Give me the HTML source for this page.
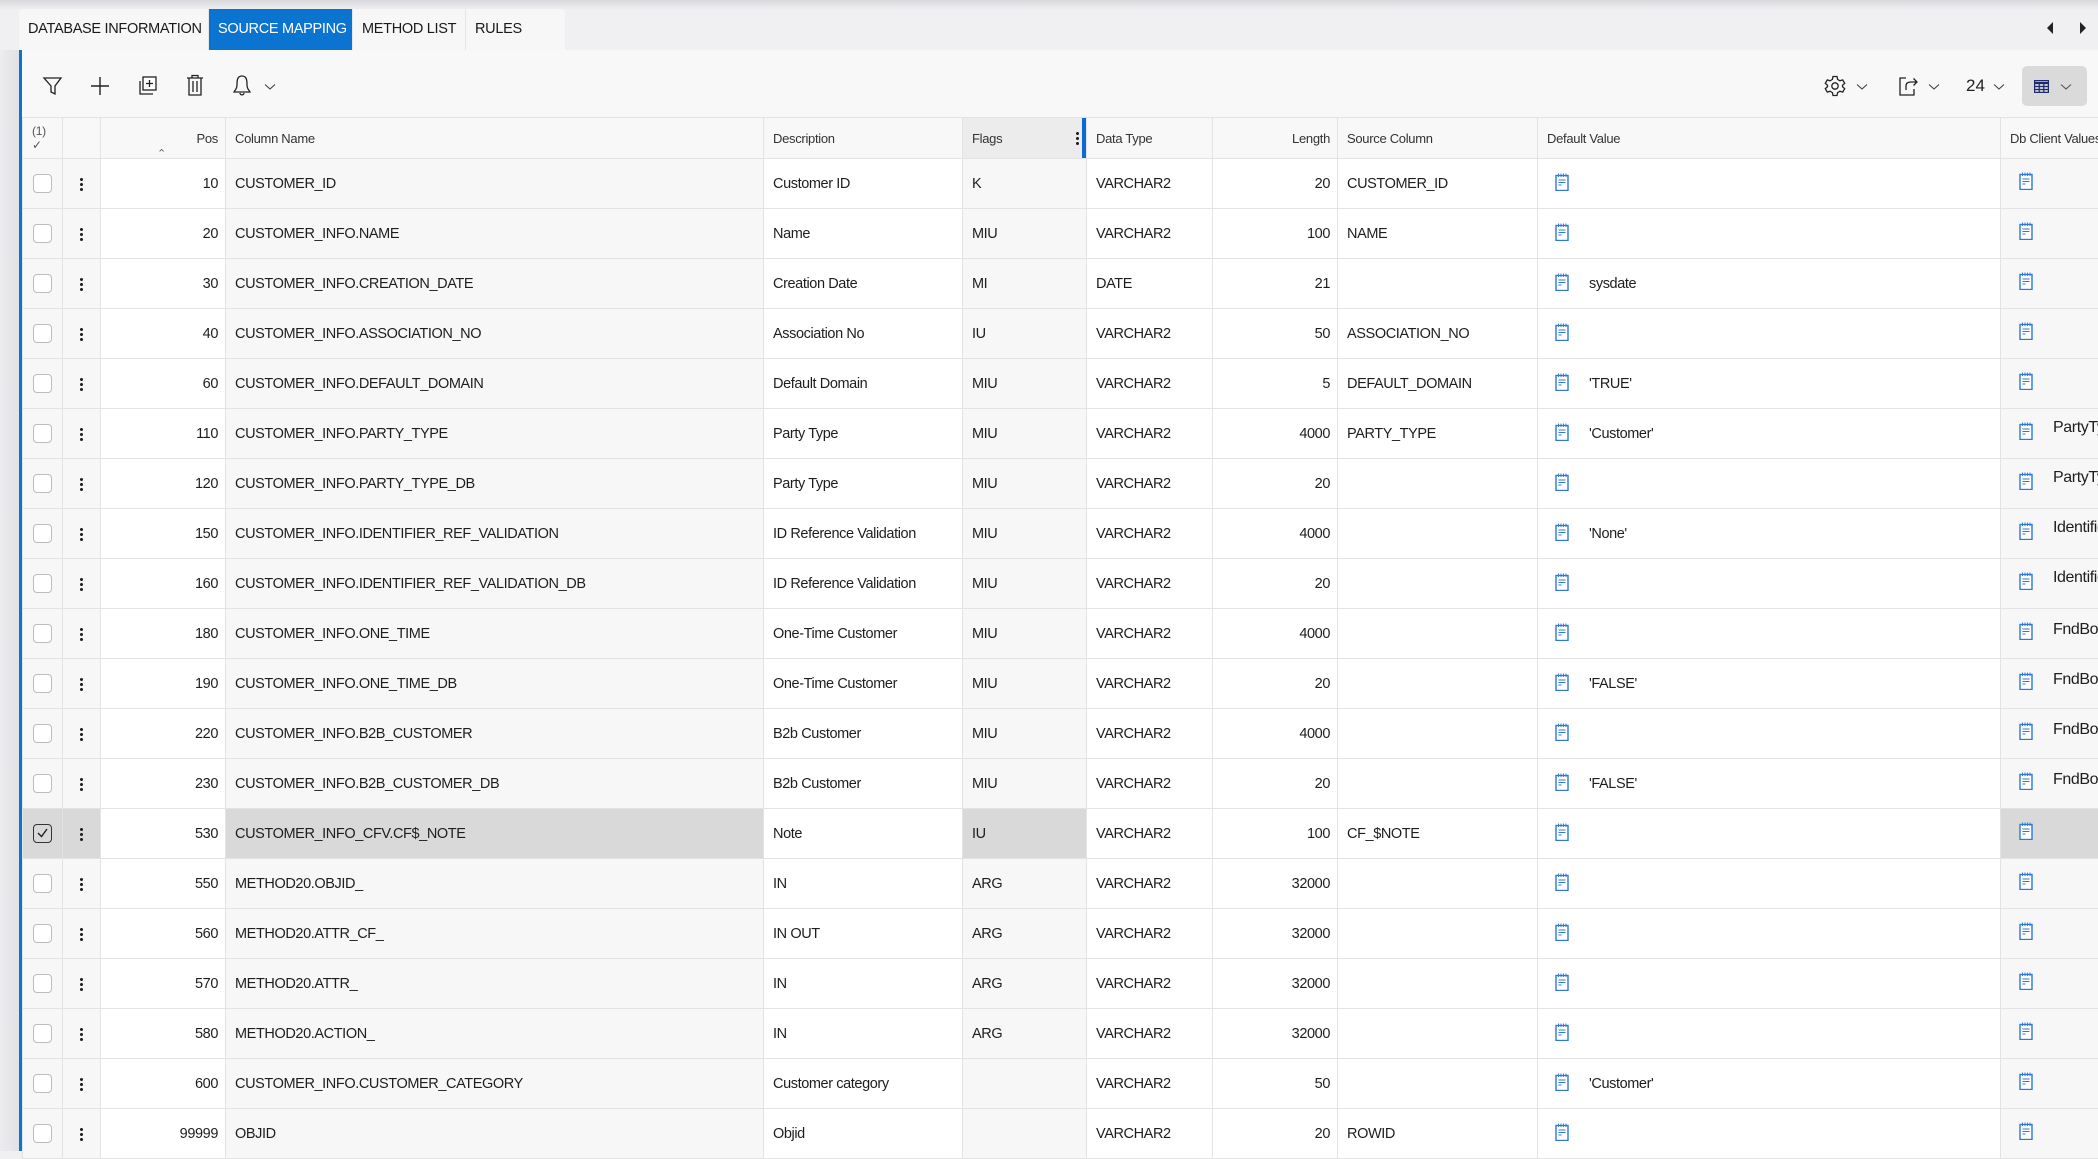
<!DOCTYPE html>
<html><head><meta charset="utf-8">
<style>
*{box-sizing:border-box;margin:0;padding:0}
html,body{width:2098px;height:1151px;overflow:hidden;background:#f0eff2;font-family:"Liberation Sans",sans-serif;color:#1e1e1e}
.topshadow{position:absolute;left:0;top:0;width:2098px;height:10px;background:linear-gradient(#d8d8dc,#f0eff2)}
.tabs{position:absolute;left:19px;top:9px;height:41px;width:546px;background:#f7f7f7;border-radius:5px 5px 0 0;display:flex}
.tab{height:41px;line-height:41px;font-size:14.5px;letter-spacing:-.3px;padding:0 9px;border-right:1px solid #e6e6e6;color:#1a1a1a;white-space:nowrap;overflow:hidden;flex:none}
.tab.act{background:#0b74d0;color:#fff}
.main{position:absolute;left:19px;top:50px;width:2079px;height:1101px;background:#f8f8f8;border-left:3px solid #0b74d0}
.leftgray{position:absolute;left:0;top:50px;width:19px;height:1101px;background:linear-gradient(90deg,#ececee,#e2e2e6)}
svg{position:absolute}
table{position:absolute;left:22px;top:117px;border-collapse:collapse;table-layout:fixed;width:2090px}
td,th{border:1px solid #e3e3e3;height:50px;font-size:14.5px;letter-spacing:-.4px;white-space:nowrap;overflow:hidden;padding:0 9px;font-weight:normal;text-align:left;background:#fff}
th{height:41px;background:#f8f8f8;font-size:13px;color:#333;letter-spacing:-.3px}
td.r,th.r{text-align:right;padding-right:7px}
td.g{background:#f7f7f7}
th.g{background:#ececec}
tr.sel td.g{background:#d9d9d9}
td.c{padding:0;text-align:center}
td.dv{padding-left:17px}
td.db{padding-left:18px;font-size:16px}
.cb{display:inline-block;width:19px;height:19px;border:1.5px solid #bdbdbd;border-radius:4px;background:#fff;vertical-align:middle}
tr.sel .cb{border-color:#333;background:transparent;position:relative}
.dots{display:inline-block;width:3px;height:14px;vertical-align:middle;background:radial-gradient(circle,#222 1.4px,transparent 1.6px) 0 0/3px 5px repeat-y}
.np{display:inline-block;width:14px;height:18px;vertical-align:middle;margin-right:20px;position:relative;top:-2px}
</style></head><body>
<div class="topshadow"></div>
<div class="tabs">
<div class="tab" style="width:190px">DATABASE INFORMATION</div>
<div class="tab act" style="width:144px">SOURCE MAPPING</div>
<div class="tab" style="width:113px">METHOD LIST</div>
<div class="tab" style="width:99px;border:none">RULES</div>
</div>
<svg style="left:2045px;top:21px" width="10" height="14"><path d="M8 1 L2 7 L8 13Z" fill="#222"/></svg>
<svg style="left:2078px;top:21px" width="10" height="14"><path d="M2 1 L8 7 L2 13Z" fill="#222"/></svg>
<div class="leftgray"></div>
<div class="main"></div>
<svg style="left:42px;top:75px" width="22" height="22" fill="none" stroke="#222" stroke-width="1.3"><path d="M2 3 H19 L13 11 V19 L9 17 V11 Z"/></svg>
<svg style="left:89px;top:75px" width="22" height="22" stroke="#222" stroke-width="1.4"><path d="M11 2 V20 M2 11 H20"/></svg>
<svg style="left:137px;top:75px" width="22" height="22" fill="none" stroke="#222" stroke-width="1.3"><rect x="6" y="2" width="13" height="13" fill="#fff"/><path d="M3 6 V19 H16"/><path d="M12.5 5 V12 M9 8.5 H16"/></svg>
<svg style="left:185px;top:74px" width="20" height="23" fill="none" stroke="#222" stroke-width="1.3"><path d="M2 4 H18 M7 4 V1.5 H13 V4 M4 4 V21 H16 V4 M8 7 V18 M12 7 V18"/></svg>
<svg style="left:232px;top:74px" width="20" height="23" fill="none" stroke="#222" stroke-width="1.3"><path d="M10 2 C5 2 5 7 5 11 C5 15 3 16 2 18 H18 C17 16 15 15 15 11 C15 7 15 2 10 2 Z M8 19 C8 21.5 12 21.5 12 19"/></svg>
<svg style="left:264px;top:83px" width="12" height="8" fill="none" stroke="#444" stroke-width="1.1"><path d="M1 1.5 L6 6 L11 1.5"/></svg>
<svg style="left:1824px;top:75px" width="22" height="22" fill="none" stroke="#222" stroke-width="1.3"><path d="M9 1.5 H13 L13.6 4.4 L15.9 5.8 L18.7 4.9 L20.7 8.4 L18.5 10.3 V11.7 L20.7 13.6 L18.7 17.1 L15.9 16.2 L13.6 17.6 L13 20.5 H9 L8.4 17.6 L6.1 16.2 L3.3 17.1 L1.3 13.6 L3.5 11.7 V10.3 L1.3 8.4 L3.3 4.9 L6.1 5.8 L8.4 4.4 Z"/><circle cx="11" cy="11" r="3.2"/></svg>
<svg style="left:1856px;top:83px" width="12" height="8" fill="none" stroke="#444" stroke-width="1.1"><path d="M1 1.5 L6 6 L11 1.5"/></svg>
<svg style="left:1898px;top:75px" width="22" height="22" fill="none" stroke="#222" stroke-width="1.3"><path d="M8 3 H2 V20 H16 V14"/><path d="M8 15 V11 C8 8 10 7 13 7 H19 M15.5 3.5 L19 7 L15.5 10.5"/></svg>
<svg style="left:1928px;top:83px" width="12" height="8" fill="none" stroke="#444" stroke-width="1.1"><path d="M1 1.5 L6 6 L11 1.5"/></svg>
<div style="position:absolute;left:1966px;top:76px;font-size:17px;color:#222">24</div>
<svg style="left:1993px;top:83px" width="12" height="8" fill="none" stroke="#444" stroke-width="1.1"><path d="M1 1.5 L6 6 L11 1.5"/></svg>
<div style="position:absolute;left:2022px;top:66px;width:65px;height:40px;background:#dadada;border-radius:5px"></div>
<svg style="left:2034px;top:80px" width="15" height="13" fill="none" stroke="#1d2a6b" stroke-width="1.2"><rect x="0.6" y="0.6" width="13.8" height="11.8"/><path d="M0.6 3 H14.4" stroke-width="2.2"/><path d="M0.6 6.5 H14.4 M0.6 9.5 H14.4 M5.2 3 V12.4 M9.8 3 V12.4"/></svg>
<svg style="left:2060px;top:83px" width="12" height="8" fill="none" stroke="#555" stroke-width="1.1"><path d="M1 1.5 L6 6 L11 1.5"/></svg>

<svg width="0" height="0"><defs><symbol id="np" viewBox="0 0 14 18"><rect x="1" y="2.5" width="12" height="15" fill="#fff" stroke="#2f78d6" stroke-width="1.4"/><path d="M3.5 0.5 V4 M6 0.5 V4 M8.5 0.5 V4 M11 0.5 V4" stroke="#2f78d6" stroke-width="0.9"/><path d="M3.5 7 H10.5 M3.5 9.5 H10.5 M3.5 12 H6.5" stroke="#2f78d6" stroke-width="1.1"/></symbol></defs></svg>

<table>
<colgroup><col style="width:40px"><col style="width:38px"><col style="width:125px"><col style="width:538px"><col style="width:199px"><col style="width:124px"><col style="width:126px"><col style="width:125px"><col style="width:200px"><col style="width:463px"><col style="width:112px"></colgroup>
<tr><th class="c" style="color:#555;font-size:12px;line-height:14px">(1)<br>&#10003;</th><th></th><th class="r" style="position:relative">Pos<span style="position:absolute;left:56px;bottom:-2px;font-size:11px;color:#666">&#8963;</span></th><th>Column Name</th><th>Description</th><th class="g" style="position:relative">Flags<span style="position:absolute;right:7px;top:13px" class="dots"></span><span style="position:absolute;right:0;top:0;width:4px;height:41px;background:#0b6ad8"></span></th><th>Data Type</th><th class="r">Length</th><th>Source Column</th><th>Default Value</th><th class="g" style="background:#f8f8f8">Db Client Values</th></tr>

<tr><td class="c g"><span class="cb"></span></td><td class="c g"><span class="dots"></span></td><td class="r">10</td><td class="g">CUSTOMER_ID</td><td>Customer ID</td><td class="g">K</td><td>VARCHAR2</td><td class="r">20</td><td>CUSTOMER_ID</td><td class="dv"><svg class="np"><use href="#np"/></svg></td><td class="g db"><svg class="np"><use href="#np"/></svg></td></tr>
<tr><td class="c g"><span class="cb"></span></td><td class="c g"><span class="dots"></span></td><td class="r">20</td><td class="g">CUSTOMER_INFO.NAME</td><td>Name</td><td class="g">MIU</td><td>VARCHAR2</td><td class="r">100</td><td>NAME</td><td class="dv"><svg class="np"><use href="#np"/></svg></td><td class="g db"><svg class="np"><use href="#np"/></svg></td></tr>
<tr><td class="c g"><span class="cb"></span></td><td class="c g"><span class="dots"></span></td><td class="r">30</td><td class="g">CUSTOMER_INFO.CREATION_DATE</td><td>Creation Date</td><td class="g">MI</td><td>DATE</td><td class="r">21</td><td></td><td class="dv"><svg class="np"><use href="#np"/></svg>sysdate</td><td class="g db"><svg class="np"><use href="#np"/></svg></td></tr>
<tr><td class="c g"><span class="cb"></span></td><td class="c g"><span class="dots"></span></td><td class="r">40</td><td class="g">CUSTOMER_INFO.ASSOCIATION_NO</td><td>Association No</td><td class="g">IU</td><td>VARCHAR2</td><td class="r">50</td><td>ASSOCIATION_NO</td><td class="dv"><svg class="np"><use href="#np"/></svg></td><td class="g db"><svg class="np"><use href="#np"/></svg></td></tr>
<tr><td class="c g"><span class="cb"></span></td><td class="c g"><span class="dots"></span></td><td class="r">60</td><td class="g">CUSTOMER_INFO.DEFAULT_DOMAIN</td><td>Default Domain</td><td class="g">MIU</td><td>VARCHAR2</td><td class="r">5</td><td>DEFAULT_DOMAIN</td><td class="dv"><svg class="np"><use href="#np"/></svg>'TRUE'</td><td class="g db"><svg class="np"><use href="#np"/></svg></td></tr>
<tr><td class="c g"><span class="cb"></span></td><td class="c g"><span class="dots"></span></td><td class="r">110</td><td class="g">CUSTOMER_INFO.PARTY_TYPE</td><td>Party Type</td><td class="g">MIU</td><td>VARCHAR2</td><td class="r">4000</td><td>PARTY_TYPE</td><td class="dv"><svg class="np"><use href="#np"/></svg>'Customer'</td><td class="g db"><svg class="np"><use href="#np"/></svg><span style="position:relative;top:-6px">PartyType</span></td></tr>
<tr><td class="c g"><span class="cb"></span></td><td class="c g"><span class="dots"></span></td><td class="r">120</td><td class="g">CUSTOMER_INFO.PARTY_TYPE_DB</td><td>Party Type</td><td class="g">MIU</td><td>VARCHAR2</td><td class="r">20</td><td></td><td class="dv"><svg class="np"><use href="#np"/></svg></td><td class="g db"><svg class="np"><use href="#np"/></svg><span style="position:relative;top:-6px">PartyType</span></td></tr>
<tr><td class="c g"><span class="cb"></span></td><td class="c g"><span class="dots"></span></td><td class="r">150</td><td class="g">CUSTOMER_INFO.IDENTIFIER_REF_VALIDATION</td><td>ID Reference Validation</td><td class="g">MIU</td><td>VARCHAR2</td><td class="r">4000</td><td></td><td class="dv"><svg class="np"><use href="#np"/></svg>'None'</td><td class="g db"><svg class="np"><use href="#np"/></svg><span style="position:relative;top:-6px">Identifier</span></td></tr>
<tr><td class="c g"><span class="cb"></span></td><td class="c g"><span class="dots"></span></td><td class="r">160</td><td class="g">CUSTOMER_INFO.IDENTIFIER_REF_VALIDATION_DB</td><td>ID Reference Validation</td><td class="g">MIU</td><td>VARCHAR2</td><td class="r">20</td><td></td><td class="dv"><svg class="np"><use href="#np"/></svg></td><td class="g db"><svg class="np"><use href="#np"/></svg><span style="position:relative;top:-6px">Identifier</span></td></tr>
<tr><td class="c g"><span class="cb"></span></td><td class="c g"><span class="dots"></span></td><td class="r">180</td><td class="g">CUSTOMER_INFO.ONE_TIME</td><td>One-Time Customer</td><td class="g">MIU</td><td>VARCHAR2</td><td class="r">4000</td><td></td><td class="dv"><svg class="np"><use href="#np"/></svg></td><td class="g db"><svg class="np"><use href="#np"/></svg><span style="position:relative;top:-4px">FndBoolean</span></td></tr>
<tr><td class="c g"><span class="cb"></span></td><td class="c g"><span class="dots"></span></td><td class="r">190</td><td class="g">CUSTOMER_INFO.ONE_TIME_DB</td><td>One-Time Customer</td><td class="g">MIU</td><td>VARCHAR2</td><td class="r">20</td><td></td><td class="dv"><svg class="np"><use href="#np"/></svg>'FALSE'</td><td class="g db"><svg class="np"><use href="#np"/></svg><span style="position:relative;top:-4px">FndBoolean</span></td></tr>
<tr><td class="c g"><span class="cb"></span></td><td class="c g"><span class="dots"></span></td><td class="r">220</td><td class="g">CUSTOMER_INFO.B2B_CUSTOMER</td><td>B2b Customer</td><td class="g">MIU</td><td>VARCHAR2</td><td class="r">4000</td><td></td><td class="dv"><svg class="np"><use href="#np"/></svg></td><td class="g db"><svg class="np"><use href="#np"/></svg><span style="position:relative;top:-4px">FndBoolean</span></td></tr>
<tr><td class="c g"><span class="cb"></span></td><td class="c g"><span class="dots"></span></td><td class="r">230</td><td class="g">CUSTOMER_INFO.B2B_CUSTOMER_DB</td><td>B2b Customer</td><td class="g">MIU</td><td>VARCHAR2</td><td class="r">20</td><td></td><td class="dv"><svg class="np"><use href="#np"/></svg>'FALSE'</td><td class="g db"><svg class="np"><use href="#np"/></svg><span style="position:relative;top:-4px">FndBoolean</span></td></tr>
<tr class="sel"><td class="c g"><span class="cb"><svg style="left:3px;top:3px" width="11" height="10" fill="none" stroke="#222" stroke-width="1.4"><path d="M1 5 L4.5 8.5 L10 1"/></svg></span></td><td class="c g"><span class="dots"></span></td><td class="r">530</td><td class="g">CUSTOMER_INFO_CFV.CF$_NOTE</td><td>Note</td><td class="g">IU</td><td>VARCHAR2</td><td class="r">100</td><td>CF_$NOTE</td><td class="dv"><svg class="np"><use href="#np"/></svg></td><td class="g db"><svg class="np"><use href="#np"/></svg></td></tr>
<tr><td class="c g"><span class="cb"></span></td><td class="c g"><span class="dots"></span></td><td class="r">550</td><td class="g">METHOD20.OBJID_</td><td>IN</td><td class="g">ARG</td><td>VARCHAR2</td><td class="r">32000</td><td></td><td class="dv"><svg class="np"><use href="#np"/></svg></td><td class="g db"><svg class="np"><use href="#np"/></svg></td></tr>
<tr><td class="c g"><span class="cb"></span></td><td class="c g"><span class="dots"></span></td><td class="r">560</td><td class="g">METHOD20.ATTR_CF_</td><td>IN OUT</td><td class="g">ARG</td><td>VARCHAR2</td><td class="r">32000</td><td></td><td class="dv"><svg class="np"><use href="#np"/></svg></td><td class="g db"><svg class="np"><use href="#np"/></svg></td></tr>
<tr><td class="c g"><span class="cb"></span></td><td class="c g"><span class="dots"></span></td><td class="r">570</td><td class="g">METHOD20.ATTR_</td><td>IN</td><td class="g">ARG</td><td>VARCHAR2</td><td class="r">32000</td><td></td><td class="dv"><svg class="np"><use href="#np"/></svg></td><td class="g db"><svg class="np"><use href="#np"/></svg></td></tr>
<tr><td class="c g"><span class="cb"></span></td><td class="c g"><span class="dots"></span></td><td class="r">580</td><td class="g">METHOD20.ACTION_</td><td>IN</td><td class="g">ARG</td><td>VARCHAR2</td><td class="r">32000</td><td></td><td class="dv"><svg class="np"><use href="#np"/></svg></td><td class="g db"><svg class="np"><use href="#np"/></svg></td></tr>
<tr><td class="c g"><span class="cb"></span></td><td class="c g"><span class="dots"></span></td><td class="r">600</td><td class="g">CUSTOMER_INFO.CUSTOMER_CATEGORY</td><td>Customer category</td><td class="g"></td><td>VARCHAR2</td><td class="r">50</td><td></td><td class="dv"><svg class="np"><use href="#np"/></svg>'Customer'</td><td class="g db"><svg class="np"><use href="#np"/></svg></td></tr>
<tr><td class="c g"><span class="cb"></span></td><td class="c g"><span class="dots"></span></td><td class="r">99999</td><td class="g">OBJID</td><td>Objid</td><td class="g"></td><td>VARCHAR2</td><td class="r">20</td><td>ROWID</td><td class="dv"><svg class="np"><use href="#np"/></svg></td><td class="g db"><svg class="np"><use href="#np"/></svg></td></tr>
</table>
</body></html>
